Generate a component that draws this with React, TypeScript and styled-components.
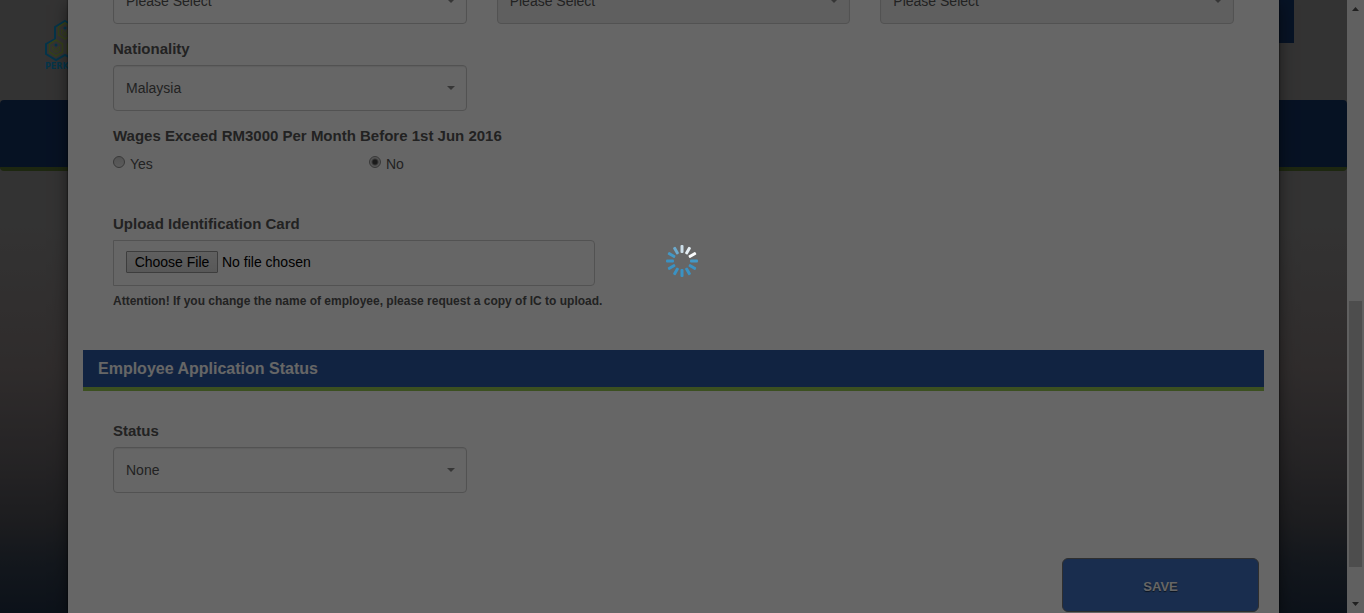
import React from "react";
import styled, { createGlobalStyle } from "styled-components";

const GlobalStyle = createGlobalStyle`
  * { box-sizing: border-box; }
  body {
    margin: 0;
    font-family: "Liberation Sans", Arial, sans-serif;
    font-size: 14px;
    line-height: 20px;
    color: #555;
  }
`;

const Screen = styled.div`
  position: relative;
  display: grid;
  grid-template-columns: minmax(0, 1fr) 17px;
  height: 100vh;
  overflow: hidden;
`;

const Page = styled.div`
  display: grid;
  grid-template: minmax(0, 1fr) / minmax(0, 1fr);
  min-height: 0;
  overflow: hidden;
  background: linear-gradient(#807f7f 0, #807f7f 37%, #766e6e 60%, #5f5b5e 74%, #48494f 85%, #303a48 92%, #1f2d40 100%);

  > * { grid-area: 1 / 1; }
`;

const Site = styled.div`
  display: flex;
  flex-direction: column;
`;

const SiteHeader = styled.header`
  display: flex;
  justify-content: space-between;
  align-items: flex-start;
  height: 100px;
  padding: 0 53px 0 44px;
`;

const Logo = styled.svg`
  display: block;
  margin-top: 18px;
`;

const AccountBox = styled.div`
  width: 200px;
  height: 43px;
  background: #122f5c;
`;

const NavBar = styled.nav`
  height: 71px;
  border-bottom: 4px solid #4a612a;
  border-radius: 4px;
  background: #112d58;
`;

const Modal = styled.main`
  display: flex;
  flex-direction: column;
  margin: 0 68px;
  padding: 0 15px;
  background: #fff;
  box-shadow: 0 0 1px 1px rgba(0, 0, 0, 0.25), 0 5px 15px rgba(0, 0, 0, 0.5);
`;

const Row = styled.div<{ $clipped?: boolean }>`
  display: grid;
  grid-template-columns: repeat(3, minmax(0, 1fr));
  gap: 30px;
  margin: 0 30px;
  ${(p) => p.$clipped && "height: 24px; align-items: end; align-content: end; overflow: hidden;"}
`;

const Field = styled.div`
  display: flex;
  flex-direction: column;
  gap: 6px;
  margin-top: 15px;
`;

const Label = styled.label`
  font-size: 15px;
  font-weight: 700;
`;

const SelectBox = styled.div`
  display: grid;
  align-items: center;

  > * { grid-area: 1 / 1; }
`;

const Select = styled.select`
  appearance: none;
  width: 100%;
  height: 46px;
  padding: 0 12px;
  border: 1px solid #ccc;
  border-radius: 4px;
  background: #fff;
  box-shadow: inset 0 1px 1px rgba(0, 0, 0, 0.08);
  color: #555;
  font: inherit;
  opacity: 1;

  &:disabled { background: #eee; }
`;

const Caret = styled.svg`
  justify-self: end;
  margin-right: 12px;
  pointer-events: none;
`;

const Fieldset = styled.fieldset`
  margin: 15px 30px 0;
  padding: 0;
  border: 0;
`;

const Legend = styled.legend`
  padding: 0;
  font-size: 15px;
  font-weight: 700;
`;

const Choices = styled.div`
  display: flex;
  padding-top: 8px;
`;

const Choice = styled.label`
  display: flex;
  gap: 5px;
  width: 256px;
`;

const Radio = styled.input`
  appearance: none;
  width: 12px;
  height: 12px;
  margin: 2px 0 0;
  border: 1px solid #8c8c8c;
  border-radius: 50%;
  background: linear-gradient(#cfcfcf, #e4e4e4);

  &:checked { background: radial-gradient(#444 0 2px, #d4d4d4 4px); }
`;

const Upload = styled.div`
  display: flex;
  flex-direction: column;
  margin: 40px 30px 0;
`;

const FileInput = styled.input`
  width: 43%;
  height: 46px;
  margin: 6px 0 5px;
  padding: 10px 12px;
  border: 1px solid #ccc;
  border-radius: 0 4px 4px 0;
  color: #000;
  font: inherit;

  &::file-selector-button {
    width: 92px;
    height: 22px;
    margin: 0 4px 0 0;
    padding: 0;
    border: 1px solid #999;
    border-radius: 1px;
    background: linear-gradient(#efefef, #dcdcdc);
    color: #000;
    font: inherit;
  }
`;

const Note = styled.strong`
  font-size: 12px;
`;

const SectionTitle = styled.h2`
  height: 41px;
  margin: 39px 0 15px;
  padding: 0 15px;
  border-bottom: 4px solid #96c850;
  background: #2b57a2;
  color: #fff;
  font-size: 16px;
  line-height: 37px;
`;

const Actions = styled.div`
  display: flex;
  justify-content: flex-end;
  padding: 65px 5px 1px;
`;

const SaveButton = styled.button`
  width: 197px;
  height: 54px;
  padding: 4px 0 0;
  border: 1px solid #777;
  border-radius: 6px;
  background: #3f72c2;
  color: #fff;
  font: 700 13px/20px "Liberation Sans", Arial, sans-serif;
  text-shadow: 0 1px 1px rgba(0, 0, 0, 0.6);
`;

const ScrollBar = styled.div`
  display: flex;
  flex-direction: column;
  background: #f1f1f1;
`;

const Arrow = styled.svg`
  display: block;
  flex: none;
`;

const Gap = styled.div<{ $share: number }>`
  flex: ${(p) => p.$share} 0 0;
`;

const Thumb = styled.div`
  flex: 266 0 0;
  margin: 0 2px;
  background: #c1c1c1;
`;

const Overlay = styled.div`
  position: absolute;
  inset: 0;
  display: grid;
  place-items: center;
  background: rgba(0, 0, 0, 0.6);
`;

const Spinner = styled.svg`
  margin-bottom: 91px;
`;

const spokes = [
  "#cbdde8", "#e6eff5", "#fafcfd", "#4398c6", "#3a92c3", "#3a92c3",
  "#3a92c3", "#3a92c3", "#3a92c3", "#3a92c3", "#4398c6", "#6ba9cc",
];

function Dropdown({ id, value, label, disabled }: { id: string; value: string; label?: string; disabled?: boolean }) {
  return (
    <SelectBox>
      <Select id={id} aria-label={label} disabled={disabled}>
        <option>{value}</option>
      </Select>
      <Caret width="8" height="4" viewBox="0 0 8 4" aria-hidden="true">
        <path d="M0 0H8L4 4Z" fill="#888" />
      </Caret>
    </SelectBox>
  );
}

function Cell({ x, y }: { x: number; y: number }) {
  return (
    <g transform={`translate(${x} ${y})`}>
      <path d="M0-8L6.500-4V4L0 8L-6.500 4V-4Z" fill="none" stroke="#84a040" strokeWidth="1.500" />
      <path d="M-3.500-1.500V2.500L-.8 4.500V1ZM3.500-1.500V2.500L.8 4.500V1Z" fill="none" stroke="#84a040" />
      <circle cy="-3" r="1.500" fill="#0c84b8" />
    </g>
  );
}

export default function App() {
  return (
    <>
      <GlobalStyle />
      <Screen>
        <Page>
          <Site>
            <SiteHeader>
              <Logo width="44" height="54" viewBox="0 0 44 54" aria-label="PERKESO">
                <path
                  d="M21 3L31 9V21L40 26V36L30 42L21 37L12 42L2 36V26L11 21V9Z"
                  fill="none" stroke="#0c84b8" strokeWidth="2"
                />
                <Cell x={21} y={13} />
                <Cell x={12} y={30} />
                <Cell x={30} y={30} />
                <text x="1" y="51" fontFamily="DejaVu Sans, sans-serif" fontSize="8" fontWeight="700" fill="#0c84b8">PERKESO</text>
              </Logo>
              <AccountBox />
            </SiteHeader>
            <NavBar />
          </Site>
          <Modal>
            <Row $clipped>
              <Dropdown id="race" label="Race" value="Please Select" />
              <Dropdown id="state" label="State" value="Please Select" disabled />
              <Dropdown id="city" label="City" value="Please Select" disabled />
            </Row>
            <Row>
              <Field>
                <Label htmlFor="nationality">Nationality</Label>
                <Dropdown id="nationality" value="Malaysia" />
              </Field>
            </Row>
            <Fieldset>
              <Legend>Wages Exceed RM3000 Per Month Before 1st Jun 2016</Legend>
              <Choices>
                <Choice><Radio type="radio" name="wages" />Yes</Choice>
                <Choice><Radio type="radio" name="wages" defaultChecked />No</Choice>
              </Choices>
            </Fieldset>
            <Upload>
              <Label htmlFor="card">Upload Identification Card</Label>
              <FileInput id="card" type="file" />
              <Note>Attention! If you change the name of employee, please request a copy of IC to upload.</Note>
            </Upload>
            <SectionTitle>Employee Application Status</SectionTitle>
            <Row>
              <Field>
                <Label htmlFor="status">Status</Label>
                <Dropdown id="status" value="None" />
              </Field>
            </Row>
            <Actions>
              <SaveButton type="button">SAVE</SaveButton>
            </Actions>
          </Modal>
        </Page>
        <ScrollBar>
          <Arrow width="17" height="17" viewBox="0 0 17 17"><path d="M5 11H12L8.500 7Z" fill="#505050" /></Arrow>
          <Gap $share={284} />
          <Thumb />
          <Gap $share={29} />
          <Arrow width="17" height="17" viewBox="0 0 17 17"><path d="M5 6H12L8.500 10Z" fill="#505050" /></Arrow>
        </ScrollBar>
        <Overlay>
          <Spinner width="32" height="32" viewBox="-16 -16 32 32" role="img" aria-label="Loading">
            {spokes.map((color, i) => (
              <rect key={i} x="-1.500" y="-16" width="3" height="8" rx="1" fill={color} transform={`rotate(${i * 30})`} />
            ))}
          </Spinner>
        </Overlay>
      </Screen>
    </>
  );
}
